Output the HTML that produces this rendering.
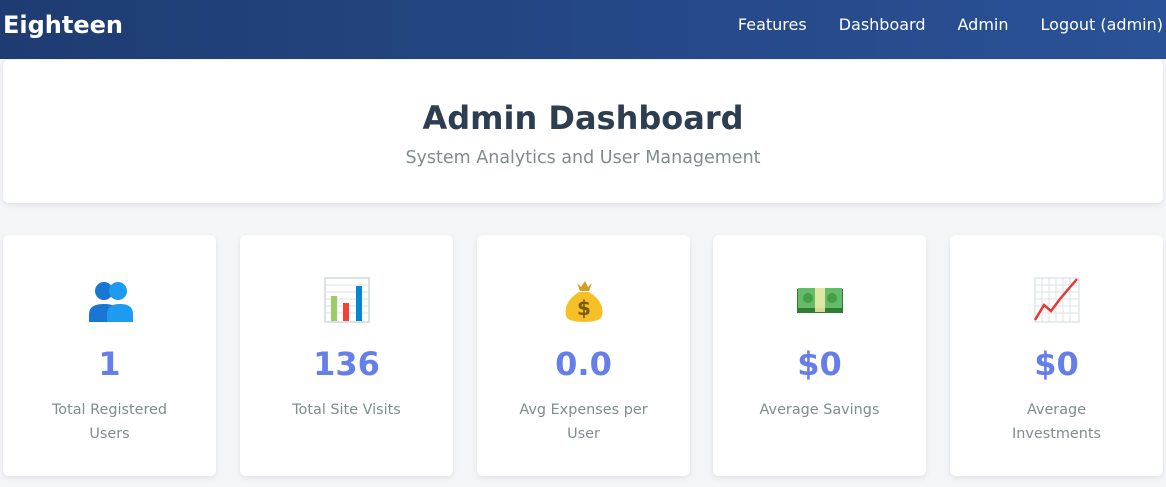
<!DOCTYPE html>
<html><head><meta charset="utf-8"><style>
*{margin:0;padding:0;box-sizing:border-box}
body{width:1166px;height:487px;overflow:hidden;background:#f4f5f9;font-family:"DejaVu Sans","Liberation Sans",sans-serif}
.nav{position:absolute;left:0;top:0;width:1166px;height:59px;background:linear-gradient(90deg,#1e3c72,#2a5298);color:#fff}
.brand{position:absolute;left:3px;top:11px;font-size:24px;font-weight:bold}
.links{position:absolute;right:3px;top:15px;font-size:16px;white-space:nowrap}
.links span{margin-left:32px}
.hero{position:absolute;left:3px;top:60px;width:1160px;height:143px;background:#fff;border-radius:6px;box-shadow:0 2px 6px rgba(0,0,0,.08);text-align:center}
.hero h1{font-size:32px;color:#2c3e50;margin-top:39px;font-weight:bold}
.hero p{font-size:17.5px;color:#7f8c8d;margin-top:11px}
.card{position:absolute;top:235px;width:213px;height:241px;background:#fff;border-radius:6px;box-shadow:0 2px 6px rgba(0,0,0,.08);text-align:center}
.card svg{position:absolute;left:82px;top:40px}
.num{position:absolute;top:110px;width:100%;font-size:32px;font-weight:bold;color:#667eea}
.lbl{position:absolute;top:163px;left:38px;right:38px;font-size:14.4px;line-height:24px;color:#7f8c8d}
</style></head><body>
<div class="nav"><div class="brand">Eighteen</div>
<div class="links"><span>Features</span><span>Dashboard</span><span>Admin</span><span>Logout (admin)</span></div></div>
<div class="hero"><h1>Admin Dashboard</h1><p>System Analytics and User Management</p></div>

<div class="card" style="left:3px"><svg width="50" height="50" viewBox="0 0 50 50"><circle cx="19" cy="16" r="9" fill="#1976d2"/><path d="M4 47v-8q0-10 15-10t15 10v8z" fill="#1976d2"/><circle cx="33" cy="16" r="9" fill="#1e9af0"/><path d="M22 47v-8q0-10 13-10t13 10v8z" fill="#1e9af0"/></svg><div class="num">1</div><div class="lbl">Total Registered Users</div></div>

<div class="card" style="left:240px"><svg width="50" height="50" viewBox="0 0 50 50"><rect x="3" y="3" width="44" height="44" fill="#fff" stroke="#cfd8dc" stroke-width="1.5"/><g stroke="#dde3e6"><line x1="3" y1="10" x2="47" y2="10"/><line x1="3" y1="17" x2="47" y2="17"/><line x1="3" y1="24" x2="47" y2="24"/><line x1="3" y1="31" x2="47" y2="31"/><line x1="3" y1="38" x2="47" y2="38"/></g><rect x="9" y="21" width="6" height="25" fill="#9ccc65"/><rect x="21" y="28" width="6" height="18" fill="#f44336"/><rect x="34" y="11" width="6" height="35" fill="#0288d1"/></svg><div class="num">136</div><div class="lbl">Total Site Visits</div></div>

<div class="card" style="left:477px"><svg width="50" height="50" viewBox="0 0 50 50"><path d="M18 8l4 4 4-6 3 6 4-4-3 8h-9z" fill="#d39e22"/><path d="M20 17q-16 10-13 24 2 6 18 6t18-6q3-14-13-24z" fill="#f6bf26"/><text x="25" y="40" font-size="20" font-weight="bold" fill="#7a5a10" text-anchor="middle" font-family="DejaVu Sans">$</text></svg><div class="num">0.0</div><div class="lbl">Avg Expenses per User</div></div>

<div class="card" style="left:713px"><svg width="50" height="50" viewBox="0 0 50 50"><rect x="2" y="14" width="46" height="24" fill="#2e7d32"/><rect x="3" y="13" width="44" height="20" fill="#66bb6a"/><rect x="20" y="13" width="10" height="24" fill="#fff3b0" opacity=".8"/><circle cx="13" cy="23" r="5" fill="#43a047"/><circle cx="37" cy="23" r="5" fill="#43a047"/></svg><div class="num">$0</div><div class="lbl">Average Savings</div></div>

<div class="card" style="left:950px"><svg width="50" height="50" viewBox="0 0 50 50"><rect x="3" y="3" width="44" height="44" fill="#fff" stroke="#cfd8dc"/><g stroke="#dde3e6"><line x1="3" y1="10" x2="47" y2="10"/><line x1="3" y1="17" x2="47" y2="17"/><line x1="3" y1="24" x2="47" y2="24"/><line x1="3" y1="31" x2="47" y2="31"/><line x1="3" y1="38" x2="47" y2="38"/><line x1="10" y1="3" x2="10" y2="47"/><line x1="17" y1="3" x2="17" y2="47"/><line x1="24" y1="3" x2="24" y2="47"/><line x1="31" y1="3" x2="31" y2="47"/><line x1="38" y1="3" x2="38" y2="47"/></g><path d="M3 45l9-15 7 6 9-12 17-20" fill="none" stroke="#e53935" stroke-width="2.5"/></svg><div class="num">$0</div><div class="lbl">Average Investments</div></div>
</body></html>
